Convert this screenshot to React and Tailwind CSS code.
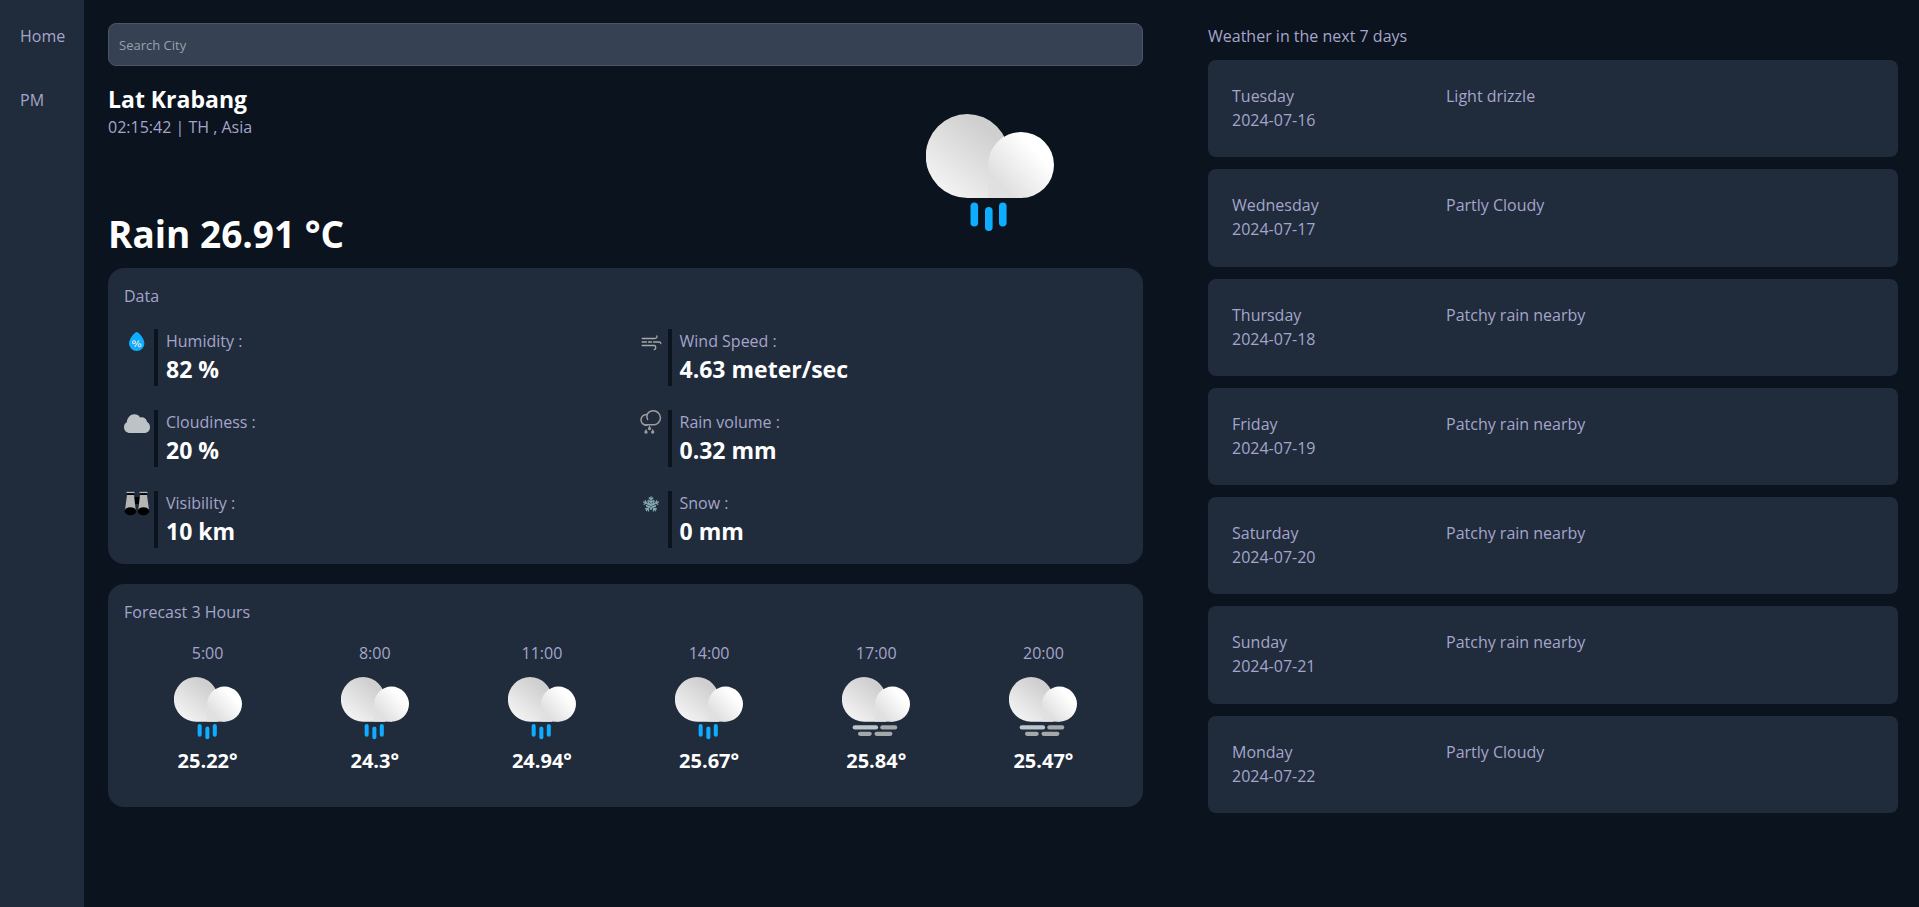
import React from "react";

const metrics = [
  { label: "Humidity :", value: "82 %", icon: "humidity" },
  { label: "Wind Speed :", value: "4.63 meter/sec", icon: "wind" },
  { label: "Cloudiness :", value: "20 %", icon: "cloud" },
  { label: "Rain volume :", value: "0.32 mm", icon: "rain" },
  { label: "Visibility :", value: "10 km", icon: "binoculars" },
  { label: "Snow :", value: "0 mm", icon: "snow" },
];

const hours = [
  { time: "5:00", temp: "25.22°", kind: "rain" },
  { time: "8:00", temp: "24.3°", kind: "rain" },
  { time: "11:00", temp: "24.94°", kind: "rain" },
  { time: "14:00", temp: "25.67°", kind: "rain" },
  { time: "17:00", temp: "25.84°", kind: "mist" },
  { time: "20:00", temp: "25.47°", kind: "mist" },
];

const days = [
  { day: "Tuesday", date: "2024-07-16", text: "Light drizzle" },
  { day: "Wednesday", date: "2024-07-17", text: "Partly Cloudy" },
  { day: "Thursday", date: "2024-07-18", text: "Patchy rain nearby" },
  { day: "Friday", date: "2024-07-19", text: "Patchy rain nearby" },
  { day: "Saturday", date: "2024-07-20", text: "Patchy rain nearby" },
  { day: "Sunday", date: "2024-07-21", text: "Patchy rain nearby" },
  { day: "Monday", date: "2024-07-22", text: "Partly Cloudy" },
];

function WeatherIcon({ kind, id, className }) {
  return (
    <svg viewBox="0 0 128 118" className={className} aria-hidden="true">
      <defs>
        <linearGradient id={`${id}-back`} x1="0.1" y1="0.9" x2="0.7" y2="0.15">
          <stop offset="0" stopColor="#f5f5f5" />
          <stop offset="1" stopColor="#cfcfcf" />
        </linearGradient>
        <linearGradient id={`${id}-front`} x1="0.2" y1="0.8" x2="0.75" y2="0.3">
          <stop offset="0" stopColor="#e0e0e0" />
          <stop offset="1" stopColor="#ffffff" />
        </linearGradient>
      </defs>
      <path
        d="M41.5 0a42 42 0 0 1 41.5 42v42H42A42 42 0 0 1 41.5 0z"
        fill={`url(#${id}-back)`}
      />
      <path d="M62 60h34v24H62z" fill="#e1e1e1" />
      <circle cx="95" cy="51" r="33" fill={`url(#${id}-front)`} />
      {kind === "rain" ? (
        <g fill="#0fadff">
          <rect x="44.5" y="88.500" width="7.600" height="24" rx="3.800" />
          <rect x="59" y="93" width="7.600" height="24" rx="3.800" />
          <rect x="73" y="88.500" width="7.600" height="24" rx="3.800" />
        </g>
      ) : (
        <g fill="#a4a8a9">
          <rect x="20" y="91" width="48" height="8" rx="4" fill="#bcc6ca" />
          <rect x="72" y="91" width="32" height="8" rx="4" />
          <rect x="30" y="103" width="26" height="8" rx="4" />
          <rect x="61" y="103" width="34" height="8" rx="4" />
        </g>
      )}
    </svg>
  );
}

function MetricIcon({ name }) {
  const common = { viewBox: "0 0 26 26", className: "h-[26px] w-[26px] shrink-0", "aria-hidden": true };
  if (name === "humidity")
    return (
      <svg {...common}>
        <path d="M12.7 3c1.6 0 7.7 6.300 7.700 11.400a7.700 7.700 0 0 1-15.400 0C5 9.300 11.100 3 12.700 3z" fill="#0fadff" />
        <g fill="none" stroke="#e2e6e8" strokeWidth="1.100">
          <circle cx="10" cy="13.200" r="1.500" />
          <circle cx="15.600" cy="16.200" r="1.500" />
          <path d="M15 11.500 10.700 18" />
        </g>
      </svg>
    );
  if (name === "cloud")
    return (
      <svg {...common}>
        <path
          d="M6.200 23C2.500 23 0 20.500 0 17.200c0-2.600 1.300-4.200 2.800-4.900C3.200 7.500 6.500 4.200 10.300 4.200c2.600 0 4.600 1.200 5.800 3.200 3.200-.9 6.500 1 7 4.600 1.800.9 2.900 2.800 2.900 5.200 0 3.300-2.300 5.800-5.700 5.800z"
          fill="#bcc2c5"
        />
      </svg>
    );
  if (name === "binoculars")
    return (
      <svg {...common}>
        <path d="M9 6h8v7H9z" fill="#000" />
        <rect x="2.500" y="0.800" width="8" height="1.200" fill="#b5b5b5" />
        <rect x="15.500" y="0.800" width="8" height="1.200" fill="#b5b5b5" />
        <path d="M3 2.600h7l-.3 1.400H3.300zM16 2.600h7l-.3 1.400h-6.400z" fill="#000" />
        <path d="M3 4h7l1.700 15H1zM16 4h7l2 15H14.300z" fill="#b5b5b5" />
        <ellipse cx="6.400" cy="20.200" rx="5.700" ry="4" fill="#000" />
        <ellipse cx="19.500" cy="20.200" rx="5.700" ry="4" fill="#000" />
      </svg>
    );
  if (name === "wind")
    return (
      <svg {...common}>
        <g fill="none" stroke="#a4a8a9" strokeWidth="1.300" strokeLinecap="round">
          <path d="M4.200 9.500h12.600c2 0 2.300-1.100 2-2.700" />
          <path d="M4.200 13h4.300M10.500 13h3M15.500 13h5.500c1.300 0 1.800.5 1.800 1.600" />
          <path d="M4.200 16.500h11.800c2.200 0 2.500 3.300.3 4.200" />
        </g>
      </svg>
    );
  if (name === "rain")
    return (
      <svg {...common}>
        <g fill="none" stroke="#9c9c9c" strokeWidth="1.500" strokeLinecap="round" strokeLinejoin="round">
          <path d="M11 14.600a5.400 5.400 0 1 1-2-10.100 7.100 7.100 0 1 1 7.800 10.300H8" />
          <path d="M9.200 4.600c-.7 1.900-.4 3.400.4 4.900" />
        </g>
        <g fill="#9c9c9c">
          <path d="M11.500 15.600l1.700 3a1.700 1.700 0 1 1-3.400 0zM8 19l1.700 3a1.700 1.700 0 1 1-3.400 0zM14.700 19l1.700 3a1.700 1.700 0 1 1-3.400 0z" />
        </g>
      </svg>
    );
  return (
    <svg {...common}>
      <g fill="none" stroke="#85a9b0" strokeWidth="1.200">
        {[0, 72, 144, 216, 288].map((angle) => (
          <g key={angle} transform={`rotate(${angle} 13 13.500)`}>
            <path d="M13 13.500V5.200M10.800 6.500 13 8.800l2.200-2.300M10.300 9 13 11.700 15.700 9" />
          </g>
        ))}
      </g>
    </svg>
  );
}

export default function App() {
  return (
    <div className="flex min-h-screen bg-[#0b131e] font-['Open_Sans','Noto_Sans',sans-serif] text-base text-[#a5a5cb]">
      <nav className="flex w-[84px] shrink-0 flex-col gap-10 bg-[#202b3b] px-5 py-6">
        <a href="#home">Home</a>
        <a href="#pm">PM</a>
      </nav>

      <div className="grid flex-1 grid-cols-[3fr_2fr] items-start gap-[65px] pr-[21px] pl-6">
        <main className="min-w-0 pt-[23px]">
          <input
            type="text"
            aria-label="Search City"
            placeholder="Search City"
            className="block h-[43px] w-full rounded-lg border border-gray-600 bg-gray-700 px-[10px] text-[13px] text-white placeholder:text-gray-400"
          />

          <section className="flex justify-between pt-[17px]">
            <div className="flex flex-col justify-between">
              <div>
                <h1 className="text-[23px] leading-8 font-bold text-white">Lat Krabang</h1>
                <p>02:15:42 | TH , Asia</p>
              </div>
              <p className="pb-[14px] text-[37px] leading-10 font-bold text-white">Rain 26.91 °C</p>
            </div>
            <div className="h-[185px] pt-[31px] pr-[89px]">
              <WeatherIcon kind="rain" id="now" className="w-32" />
            </div>
          </section>

          <section className="rounded-2xl bg-[#202b3b] p-4">
            <h2>Data</h2>
            <div className="mt-[21px] grid grid-cols-2 gap-6">
              {metrics.map((m) => (
                <div key={m.label} className="flex gap-1">
                  <MetricIcon name={m.icon} />
                  <div className="border-l-4 border-[#0b131e] pl-2">
                    <p>{m.label}</p>
                    <p className="text-[23px] leading-[33px] font-bold text-white">{m.value}</p>
                  </div>
                </div>
              ))}
            </div>
          </section>

          <section className="mt-5 rounded-2xl bg-[#202b3b] px-4 pt-4 pb-8">
            <h2>Forecast 3 Hours</h2>
            <div className="mt-[17px] grid grid-cols-6">
              {hours.map((h, i) => (
                <div key={h.time} className="flex flex-col items-center">
                  <p>{h.time}</p>
                  <WeatherIcon kind={h.kind} id={`hour-${i}`} className="mt-3 mb-[7px] w-[68px]" />
                  <p className="text-xl font-bold text-white">{h.temp}</p>
                </div>
              ))}
            </div>
          </section>
        </main>

        <aside className="min-w-0 pt-6">
          <h2>Weather in the next 7 days</h2>
          <ul className="mt-3 grid min-h-[753px] auto-rows-fr gap-3">
            {days.map((d) => (
              <li key={d.date} className="grid grid-cols-3 items-start rounded-lg bg-[#202b3b] p-6">
                <div>
                  <p>{d.day}</p>
                  <p>{d.date}</p>
                </div>
                <p className="col-span-2">{d.text}</p>
              </li>
            ))}
          </ul>
        </aside>
      </div>
    </div>
  );
}
